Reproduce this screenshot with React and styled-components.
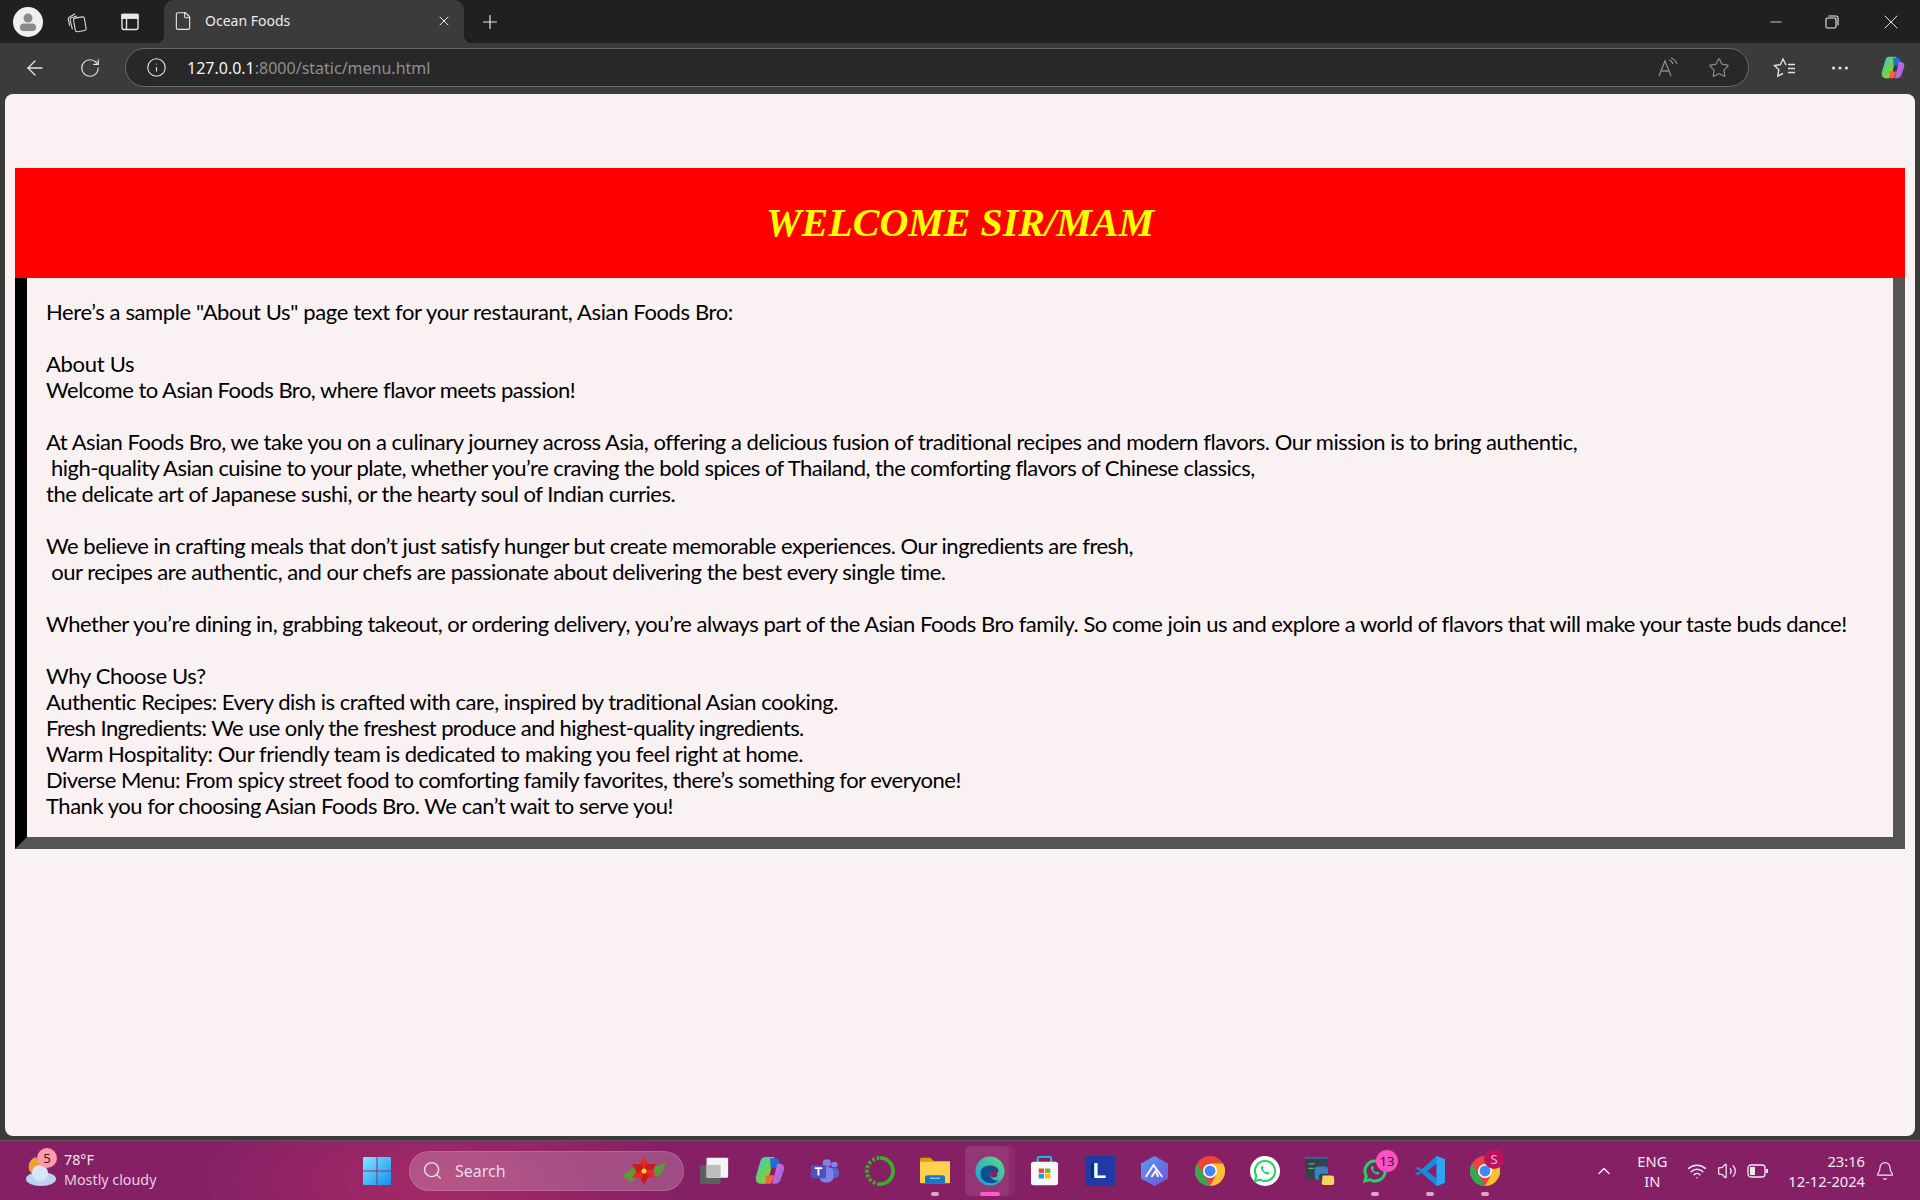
import styled, { createGlobalStyle } from 'styled-components'
import {
  ArrowLeft, RotateCw, Info, Star, MoreHorizontal, Plus, X, Minus, File, Search,
  ChevronUp, Wifi, Volume2, Bell,
} from 'lucide-react'

const Global = createGlobalStyle`
  html, body { margin: 0; padding: 0; background: #3b3b3b; }
  body { font-family: "Noto Sans", "Liberation Sans", sans-serif; }
`

const Screen = styled.div`
  width: 1920px;
  height: 1200px;
  display: flex;
  flex-direction: column;
  overflow: hidden;
  background: #3b3b3b;
`

/* browser chrome */
const TabStrip = styled.div`
  height: 43px;
  flex: none;
  display: flex;
  align-items: flex-end;
  background: #202020;
  color: #e6e6e6;
`
const Avatar = styled.div`
  width: 30px;
  height: 30px;
  margin: 0 0 6px 13px;
  border-radius: 50%;
  background: #f0f0f0;
  display: flex;
  align-items: center;
  justify-content: center;
`
const StripIcon = styled.div`
  width: 22px;
  height: 22px;
  margin: 0 0 ${p => p.$bottom ?? 10}px ${p => p.$left}px;
  display: flex;
  align-items: center;
  justify-content: center;
`
const Tab = styled.div`
  position: relative;
  width: 300px;
  height: 43px;
  margin-left: 23px;
  padding: 0 12px 2px 9px;
  box-sizing: border-box;
  display: flex;
  align-items: center;
  border-radius: 10px 10px 0 0;
  background: #3b3b3b;
  font-size: 14px;
  color: #ececec;
  &::before, &::after {
    content: "";
    position: absolute;
    bottom: 0;
    width: 8px;
    height: 8px;
  }
  &::before {
    left: -8px;
    background: radial-gradient(circle at 0 0, transparent 8px, #3b3b3b 8.5px);
  }
  &::after {
    right: -8px;
    background: radial-gradient(circle at 100% 0, transparent 8px, #3b3b3b 8.5px);
  }
`
const TabTitle = styled.span`
  flex: 1;
  margin-left: 12px;
`
const WindowButtons = styled.div`
  margin-left: auto;
  height: 43px;
  display: flex;
  align-items: center;
  gap: 40px;
  padding-right: 17px;
`
const Toolbar = styled.div`
  height: 51px;
  flex: none;
  display: flex;
  align-items: center;
  padding-bottom: 2px;
  box-sizing: border-box;
  color: #e4e4e4;
`
const ToolButton = styled.div`
  width: 24px;
  height: 24px;
  margin-left: ${p => p.$left}px;
  display: flex;
  align-items: center;
  justify-content: center;
`
const Address = styled.div`
  width: 1624px;
  height: 39px;
  margin-left: 23px;
  padding: 0 17px 0 20px;
  box-sizing: border-box;
  display: flex;
  align-items: center;
  border: 1px solid #6a6a6a;
  border-radius: 20px;
  background: #282828;
`
const Url = styled.div`
  margin-left: 20px;
  flex: 1;
  font-size: 16px;
  color: #8f8f8f;
  b { font-weight: 400; color: #f4f4f4; }
`

/* page */
const Page = styled.main`
  flex: 1;
  margin: 0 5px;
  padding: 74px 10px 0;
  border-radius: 8px;
  background: #f9f1f2;
`
const Banner = styled.h1`
  height: 110px;
  margin: 0;
  padding-bottom: 2px;
  box-sizing: border-box;
  display: flex;
  align-items: center;
  justify-content: center;
  background: #ff0000;
  color: #ffff00;
  font: italic 700 40px "Liberation Serif", serif;
`
const About = styled.div`
  height: 571px;
  box-sizing: border-box;
  padding: 21px 19px 0;
  border-style: solid;
  border-width: 0 12px 12px;
  border-color: #000 #555 #555 #000;
  color: #000;
  font: 400 22px/26px Lato, "Noto Sans", sans-serif;
  font-variant-ligatures: none;
`
const Line = styled.div`
  height: 26px;
  white-space: pre;
  letter-spacing: ${p => p.$track || 0}px;
`

/* taskbar */
const Taskbar = styled.footer`
  height: 60px;
  flex: none;
  margin-top: 4px;
  display: flex;
  align-items: center;
  position: relative;
  border-top: 1px solid #6b4a62;
  box-sizing: border-box;
  color: #f3e6ef;
  background:
    radial-gradient(ellipse 240px 90px at 440px 40px, #a52a68 0%, rgba(165, 42, 104, 0) 100%),
    #862065;
`
const Weather = styled.div`
  width: 363px;
  flex: none;
  display: flex;
  align-items: center;
  padding-left: 24px;
  box-sizing: border-box;
`
const WeatherIcon = styled.div`
  position: relative;
  width: 36px;
  height: 36px;
`
const CountBadge = styled.span`
  position: absolute;
  top: ${p => p.$top}px;
  right: ${p => p.$right}px;
  min-width: ${p => p.$size}px;
  height: ${p => p.$size}px;
  border-radius: 50%;
  display: flex;
  align-items: center;
  justify-content: center;
  background: ${p => p.$bg};
  color: ${p => p.$color};
  font-size: 13px;
`
const WeatherText = styled.div`
  margin-left: 4px;
  padding-bottom: 2px;
  font-size: 14.3px;
  line-height: 20px;
  div:last-child { color: #e6cfe0; }
`
const SearchBox = styled.div`
  width: 275px;
  height: 40px;
  margin-left: 18px;
  padding: 0 17px 0 12px;
  box-sizing: border-box;
  display: flex;
  align-items: center;
  border-radius: 20px;
  border: 1px solid rgba(255, 255, 255, 0.14);
  background: rgba(255, 255, 255, 0.2);
  font-size: 16px;
  color: #ecdce8;
`
const SearchLabel = styled.span`
  flex: 1;
  margin-left: 12px;
`
const Apps = styled.div`
  display: flex;
  margin-left: 3px;
`
const AppSlot = styled.div`
  position: relative;
  width: 55px;
  height: 56px;
  display: flex;
  align-items: center;
  justify-content: center;
  &::before {
    content: "";
    display: ${p => (p.$active ? 'block' : 'none')};
    position: absolute;
    left: 3px;
    top: 3px;
    width: 44px;
    height: 50px;
    border-radius: 5px;
    background: rgba(255, 255, 255, 0.1);
    box-shadow: 6px 0 0 rgba(255, 255, 255, 0.05);
  }
  &::after {
    content: "";
    display: ${p => (p.$dot || p.$active ? 'block' : 'none')};
    position: absolute;
    left: 50%;
    bottom: 3px;
    transform: translateX(-50%);
    width: ${p => (p.$active ? 20 : 8)}px;
    height: 4px;
    border-radius: 2px;
    background: ${p => (p.$active ? '#ff5ad0' : '#d9a8c9')};
  }
  svg { position: relative; }
`
const Tray = styled.div`
  margin-left: auto;
  display: flex;
  align-items: center;
  padding-right: 25px;
  font-size: 14.7px;
  color: #f5e9f1;
`
const Lang = styled.div`
  margin-left: 18px;
  width: 40px;
  text-align: center;
  line-height: 20px;
`
const TrayIcons = styled.div`
  margin-left: 15px;
  display: flex;
  align-items: center;
  gap: 10px;
`
const Clock = styled.div`
  margin-left: 19px;
  text-align: right;
  line-height: 20px;
`
const BellSlot = styled.div`
  margin-left: 10px;
  display: flex;
`
const LTile = styled.div`
  width: 30px;
  height: 30px;
  display: flex;
  align-items: center;
  justify-content: center;
  background: #1e3aa6;
  color: #fff;
  text-shadow: -3px 0 0 #0c2a66;
  font: 700 22px "Liberation Sans", sans-serif;
`

const lines = [
  ['Here’s a sample "About Us" page text for your restaurant, Asian Foods Bro:', -0.376],
  [''],
  ['About Us', -0.3],
  ['Welcome to Asian Foods Bro, where flavor meets passion!', -0.51],
  [''],
  ['At Asian Foods Bro, we take you on a culinary journey across Asia, offering a delicious fusion of traditional recipes and modern flavors. Our mission is to bring authentic,', -0.456],
  [' high-quality Asian cuisine to your plate, whether you’re craving the bold spices of Thailand, the comforting flavors of Chinese classics,', -0.54],
  ['the delicate art of Japanese sushi, or the hearty soul of Indian curries.', -0.476],
  [''],
  ['We believe in crafting meals that don’t just satisfy hunger but create memorable experiences. Our ingredients are fresh,', -0.48],
  [' our recipes are authentic, and our chefs are passionate about delivering the best every single time.', -0.48],
  [''],
  ['Whether you’re dining in, grabbing takeout, or ordering delivery, you’re always part of the Asian Foods Bro family. So come join us and explore a world of flavors that will make your taste buds dance!', -0.482],
  [''],
  ['Why Choose Us?', -0.35],
  ['Authentic Recipes: Every dish is crafted with care, inspired by traditional Asian cooking.', -0.49],
  ['Fresh Ingredients: We use only the freshest produce and highest-quality ingredients.', -0.6],
  ['Warm Hospitality: Our friendly team is dedicated to making you feel right at home.', -0.45],
  ['Diverse Menu: From spicy street food to comforting family favorites, there’s something for everyone!', -0.53],
  ['Thank you for choosing Asian Foods Bro. We can’t wait to serve you!', -0.47],
]

const Profile = () => (
  <svg width="22" height="22" viewBox="0 0 22 22">
    <circle cx="11" cy="7" r="4.5" fill="#8a8a8a" />
    <rect x="3" y="12.5" width="16" height="7.5" rx="3.5" fill="#8a8a8a" />
  </svg>
)
const Workspaces = () => (
  <svg width="24" height="24" viewBox="0 0 24 24" fill="none" stroke="#d8d8d8" strokeWidth="1.2">
    <rect x="9" y="7" width="12" height="15" rx="2" transform="rotate(-10 15 14)" />
    <path d="M7 20 4.500 10c-.3-1.300.3-2.300 1.500-2.700L12 5.500" />
    <path d="M4 16 2.500 9.500C2.200 8 3 7 4 6.500L10 3" />
  </svg>
)
const VerticalTabs = () => (
  <svg width="20" height="20" viewBox="0 0 20 20" fill="none" stroke="#e8e8e8" strokeWidth="1.4">
    <rect x="2" y="2.500" width="16" height="15" rx="2" />
    <path d="M2 6h16M6.500 6v11.500" />
    <path d="M2 2.500h16V6H2z" fill="#e8e8e8" />
  </svg>
)
const Restore = () => (
  <svg width="14" height="14" viewBox="0 0 14 14" fill="none" stroke="#eee" strokeWidth="1.1">
    <rect x="1" y="3" width="10" height="10" rx="1.500" />
    <path d="M3.500 1h7.500A2 2 0 0 1 13 3v7.500" />
  </svg>
)
const ReadAloud = () => (
  <svg width="22" height="22" viewBox="0 0 22 22" fill="none" stroke="#8b8b8b" strokeWidth="1.3">
    <path d="M2 19 8 4l6 15M4 14h8" />
    <path d="M12 3c2 .7 3.500 2 4 4M14 1c3 1 5 3 6 6" />
  </svg>
)
const Favorites = () => (
  <svg width="24" height="24" viewBox="0 0 24 24" fill="none" stroke="#e4e4e4" strokeWidth="1.4">
    <path d="M13 9 10 3 7.400 8.700 1.500 9.500l4.300 4.200-1 6.300L10 17.500" />
    <path d="M15 8.500h7M15 12.500h7M15 16.500h7" />
  </svg>
)
const Copilot = ({ size = 28 }) => (
  <svg width={size} height={size} viewBox="0 0 28 28">
    <defs>
      <linearGradient id="cpA" x1="0" y1="0" x2="1" y2="1">
        <stop offset="0" stopColor="#38c8f0" />
        <stop offset="0.55" stopColor="#6fd04c" />
        <stop offset="1" stopColor="#f4c63c" />
      </linearGradient>
      <linearGradient id="cpB" x1="0" y1="0" x2="1" y2="1">
        <stop offset="0" stopColor="#e86ad0" />
        <stop offset="1" stopColor="#8a64ee" />
      </linearGradient>
    </defs>
    <path d="M9 1h9l-6 22c-.5 2-2 3-4 3H6C2 26 0 23 1 19L5 5c.6-2.400 2-4 4-4z" fill="url(#cpA)" />
    <path d="M14 2h5c2 0 3 1 3.600 3l-2 6h-6z" fill="#1e6fd8" />
    <path d="M20 7h3c3 0 5 3 4 6l-3 9c-.6 2-2.400 4-5 4h-3l5-19z" fill="url(#cpB)" />
    <path d="M10 18h8l-2.500 7c-.3.800-1.500 1-2.500 1h-2c-2 0-2.500-1.500-1-3z" fill="#f2643c" />
  </svg>
)
const CloudSun = () => (
  <svg width="36" height="36" viewBox="0 0 36 36">
    <path d="M12 4a10 10 0 0 0-4 17h12z" fill="#f0a030" />
    <ellipse cx="17" cy="26" rx="15" ry="7" fill="#bcd4f2" />
    <circle cx="16" cy="20" r="8" fill="#d8e6fa" />
  </svg>
)
const WinLogo = () => (
  <svg width="28" height="30" viewBox="0 0 28 30">
    <defs>
      <linearGradient id="win" x1="0" y1="0" x2="1" y2="1">
        <stop offset="0" stopColor="#7fe8ff" />
        <stop offset="1" stopColor="#0f8ff0" />
      </linearGradient>
    </defs>
    <path d="M1 1h12.500v13.500H0V2a1 1 0 0 1 1-1zM14.500 1H27a1 1 0 0 1 1 1v12.500H14.500zM0 15.500h13.500V29H1a1 1 0 0 1-1-1zM14.500 15.500H28V28a1 1 0 0 1-1 1H14.500z" fill="url(#win)" />
  </svg>
)
const Poinsettia = () => (
  <svg width="44" height="28" viewBox="0 0 44 28">
    <path d="M0 19 12 10l5 9-8 6zM44 6 32 10l1 11 7-5z" fill="#5c9a3a" />
    {[0, 60, 120, 180, 240, 300].map(a => (
      <path key={a} d="M22 0 27 9 22 14 17 9z" fill={a % 120 ? '#c81c1c' : '#e62a22'} transform={`rotate(${a} 22 14)`} />
    ))}
    <circle cx="22" cy="14" r="2.500" fill="#f2d030" />
  </svg>
)
const Stacked = () => (
  <svg width="30" height="27" viewBox="0 0 32 34" preserveAspectRatio="none">
    <rect x="0" y="10" width="22" height="24" rx="2" fill="#5e5e5e" />
    <rect x="7" y="1" width="23" height="25" rx="1" fill="#f4f4f4" />
    <rect x="7" y="10" width="15" height="16" fill="#bdbdbd" />
  </svg>
)
const Teams = () => (
  <svg width="30" height="26" viewBox="0 0 32 32" preserveAspectRatio="none">
    <circle cx="26" cy="8" r="3.500" fill="#7b83eb" />
    <circle cx="18" cy="6" r="4.500" fill="#7b83eb" />
    <rect x="20" y="12" width="11" height="13" rx="5" fill="#5a62c8" />
    <rect x="10" y="11" width="15" height="19" rx="6" fill="#7b83eb" />
    <rect x="1" y="9" width="16" height="16" rx="2" fill="#4b53bc" />
    <path d="M5 12.500h8M9 12.500v9" stroke="#fff" strokeWidth="2" fill="none" />
  </svg>
)
const Ring = () => (
  <svg width="30" height="30" viewBox="0 0 32 32" fill="none">
    <path d="M16 2a14 14 0 0 1 0 28" stroke="#3cb024" strokeWidth="4" />
    <path d="M16 30a14 14 0 0 1 0-28" stroke="#3cb024" strokeWidth="4" strokeDasharray="3 2" />
  </svg>
)
const Folder = () => (
  <svg width="30" height="27" viewBox="0 0 30 34" preserveAspectRatio="none">
    <path d="M0 3a2 2 0 0 1 2-2h8l4 4h16v6H0z" fill="#d9a008" />
    <rect x="0" y="6" width="30" height="27" rx="1" fill="#fdd14c" />
    <path d="M5 33v-7a3 3 0 0 1 3-3h14a3 3 0 0 1 3 3v7z" fill="#1c74c4" />
    <rect x="10" y="26" width="10" height="1.500" fill="#9bd0f2" />
  </svg>
)
const Edge = () => (
  <svg width="30" height="30" viewBox="0 0 32 32">
    <defs>
      <linearGradient id="edg" x1="0" y1="1" x2="1" y2="0">
        <stop offset="0" stopColor="#1c9ce0" />
        <stop offset="1" stopColor="#5cdc7c" />
      </linearGradient>
    </defs>
    <circle cx="16" cy="16" r="15.500" fill="url(#edg)" />
    <path d="M6 18c0-6 5-8 10-8s8 2 9 5c1 2-2 4-6 3-3-.5-4 1-3 3 1 3 5 6 9 5-4 4-11 4-15 1-3-2-4-5-4-9z" fill="#0d4f96" />
    <circle cx="20" cy="19" r="4" fill="#862065" />
  </svg>
)
const Store = () => (
  <svg width="29" height="30" viewBox="0 0 30 36" preserveAspectRatio="none">
    <path d="M8 8V3a2 2 0 0 1 2-2h10a2 2 0 0 1 2 2v5" fill="none" stroke="#2cc0ec" strokeWidth="2" />
    <rect x="1" y="7" width="28" height="28" rx="3" fill="#f6f6f6" />
    <rect x="9" y="15" width="5.500" height="5.500" fill="#e8502c" />
    <rect x="15.500" y="15" width="5.500" height="5.500" fill="#78b828" />
    <rect x="9" y="21.500" width="5.500" height="5.500" fill="#10a0e8" />
    <rect x="15.500" y="21.500" width="5.500" height="5.500" fill="#f8b818" />
  </svg>
)
const Hex = () => (
  <svg width="27" height="30" viewBox="0 0 28 36" preserveAspectRatio="none">
    <defs>
      <linearGradient id="hex" x1="0" y1="0" x2="1" y2="1">
        <stop offset="0" stopColor="#58a0f0" />
        <stop offset="1" stopColor="#7050e0" />
      </linearGradient>
    </defs>
    <path d="M14 0l14 9v18l-14 9L0 27V9z" fill="url(#hex)" />
    <path d="M5 25 13 11l9 14M11 25l4-7 3 7" fill="none" stroke="#fff" strokeWidth="2" />
  </svg>
)
const Chrome = () => (
  <svg width="30" height="30" viewBox="0 0 36 36">
    <circle cx="18" cy="18" r="18" fill="#e8453c" />
    <path d="M18 36A18 18 0 0 1 2.400 9L11 23.500l7 12.500z" fill="#34a853" />
    <path d="M18 36A18 18 0 0 0 33.600 9H18l7 14.500z" fill="#fbc02d" />
    <circle cx="18" cy="18" r="8.500" fill="#fff" />
    <circle cx="18" cy="18" r="6.500" fill="#4285f4" />
  </svg>
)
const WhatsApp = ({ solid }) => (
  <svg width="30" height="30" viewBox="0 0 36 36">
    {solid && <circle cx="18" cy="18" r="18" fill="#fff" />}
    <path d="M18 6a12 12 0 0 0-10.400 18L6 30l6.200-1.600A12 12 0 1 0 18 6z" fill="none" stroke="#25d366" strokeWidth={solid ? 2.500 : 3.500} />
    <path d="M14 12c-1 1-1.500 2.500 0 5s4 4.500 6 5 3-.5 3.500-2l-3-1.500-1.500 1c-1.500-.7-3-2-3.500-3.500l1-1.500-1-2.500z" fill="#25d366" />
  </svg>
)
const PyApp = () => (
  <svg width="30" height="32" viewBox="0 0 34 36">
    <rect x="0" y="2" width="26" height="26" fill="#34424c" />
    <rect x="0" y="2" width="26" height="2" fill="#2a6fb8" />
    <path d="M4 10h7M4 15h6" stroke="#5cb85c" strokeWidth="1.500" />
    <path d="M16 13h7a3 3 0 0 1 3 3v5h-7a3 3 0 0 0-3 3v4h-2a3 3 0 0 1-3-3v-9a3 3 0 0 1 3-3z" fill="#3c80bc" />
    <path d="M20 23h10a3 3 0 0 1 3 3v5a3 3 0 0 1-3 3h-8a3 3 0 0 1-3-3z" fill="#f6d55c" />
  </svg>
)
const VsCode = () => (
  <svg width="30" height="30" viewBox="0 0 32 36" preserveAspectRatio="none">
    <path d="M23 0 32 4v28l-9 4L7 20l-4 3-3-2 6-3-6-3 3-2 4 3z" fill="#1a8ad8" />
    <path d="M23 9 13 18l10 9z" fill="#862065" />
    <path d="M23 0l9 4v28l-9 4z" fill="#2ca4ee" />
  </svg>
)
const Battery = () => (
  <svg width="22" height="16" viewBox="0 0 22 16" fill="none" stroke="#f5e9f1" strokeWidth="1.300">
    <rect x="1" y="2" width="17" height="12" rx="3" />
    <rect x="3" y="4" width="5" height="8" fill="#f5e9f1" stroke="none" />
    <path d="M20 6v4" strokeWidth="2" />
  </svg>
)

export default function App() {
  return (
    <Screen>
      <Global />
      <TabStrip>
        <Avatar><Profile /></Avatar>
        <StripIcon $left={23}><Workspaces /></StripIcon>
        <StripIcon $left={31}><VerticalTabs /></StripIcon>
        <Tab>
          <File size={20} strokeWidth={1.300} />
          <TabTitle>Ocean Foods</TabTitle>
          <X size={16} strokeWidth={1.500} />
        </Tab>
        <StripIcon $left={15}><Plus size={24} strokeWidth={1.300} /></StripIcon>
        <WindowButtons>
          <Minus size={18} strokeWidth={1.100} />
          <Restore />
          <X size={24} strokeWidth={1} />
        </WindowButtons>
      </TabStrip>
      <Toolbar>
        <ToolButton $left={23}><ArrowLeft size={24} strokeWidth={1.300} /></ToolButton>
        <ToolButton $left={31}><RotateCw size={22} strokeWidth={1.300} /></ToolButton>
        <Address>
          <Info size={21} strokeWidth={1.300} color="#e4e4e4" />
          <Url><b>127.0.0.1</b>:8000/static/menu.html</Url>
          <ReadAloud />
          <ToolButton $left={28}><Star size={22} strokeWidth={1.300} color="#8b8b8b" /></ToolButton>
        </Address>
        <ToolButton $left={24}><Favorites /></ToolButton>
        <ToolButton $left={31}><MoreHorizontal size={22} strokeWidth={1.500} /></ToolButton>
        <ToolButton $left={29}><Copilot /></ToolButton>
      </Toolbar>
      <Page>
        <Banner>WELCOME SIR/MAM</Banner>
        <About>
          {lines.map(([text, track], i) => (
            <Line key={i} $track={track}>{text}</Line>
          ))}
        </About>
      </Page>
      <Taskbar>
        <Weather>
          <WeatherIcon>
            <CloudSun />
            <CountBadge $top={-5} $right={3} $size={20} $bg="#ff9aa8" $color="#222">5</CountBadge>
          </WeatherIcon>
          <WeatherText>
            <div>78°F</div>
            <div>Mostly cloudy</div>
          </WeatherText>
        </Weather>
        <WinLogo />
        <SearchBox>
          <Search size={21} strokeWidth={1.600} />
          <SearchLabel>Search</SearchLabel>
          <Poinsettia />
        </SearchBox>
        <Apps>
          <AppSlot><Stacked /></AppSlot>
          <AppSlot><Copilot size={30} /></AppSlot>
          <AppSlot><Teams /></AppSlot>
          <AppSlot><Ring /></AppSlot>
          <AppSlot $dot><Folder /></AppSlot>
          <AppSlot $active><Edge /></AppSlot>
          <AppSlot><Store /></AppSlot>
          <AppSlot><LTile>L</LTile></AppSlot>
          <AppSlot><Hex /></AppSlot>
          <AppSlot><Chrome /></AppSlot>
          <AppSlot><WhatsApp solid /></AppSlot>
          <AppSlot><PyApp /></AppSlot>
          <AppSlot $dot>
            <WhatsApp />
            <CountBadge $top={7} $right={4} $size={22} $bg="#ff4fc4" $color="#222">13</CountBadge>
          </AppSlot>
          <AppSlot $dot><VsCode /></AppSlot>
          <AppSlot $dot>
            <Chrome />
            <CountBadge $top={6} $right={8} $size={20} $bg="#b8135c" $color="#f3b6d0">S</CountBadge>
          </AppSlot>
        </Apps>
        <Tray>
          <ChevronUp size={20} strokeWidth={1.800} />
          <Lang>ENG<br />IN</Lang>
          <TrayIcons>
            <Wifi size={20} strokeWidth={1.800} />
            <Volume2 size={20} strokeWidth={1.500} />
            <Battery />
          </TrayIcons>
          <Clock>23:16<br />12-12-2024</Clock>
          <BellSlot><Bell size={20} strokeWidth={1.400} /></BellSlot>
        </Tray>
      </Taskbar>
    </Screen>
  )
}
